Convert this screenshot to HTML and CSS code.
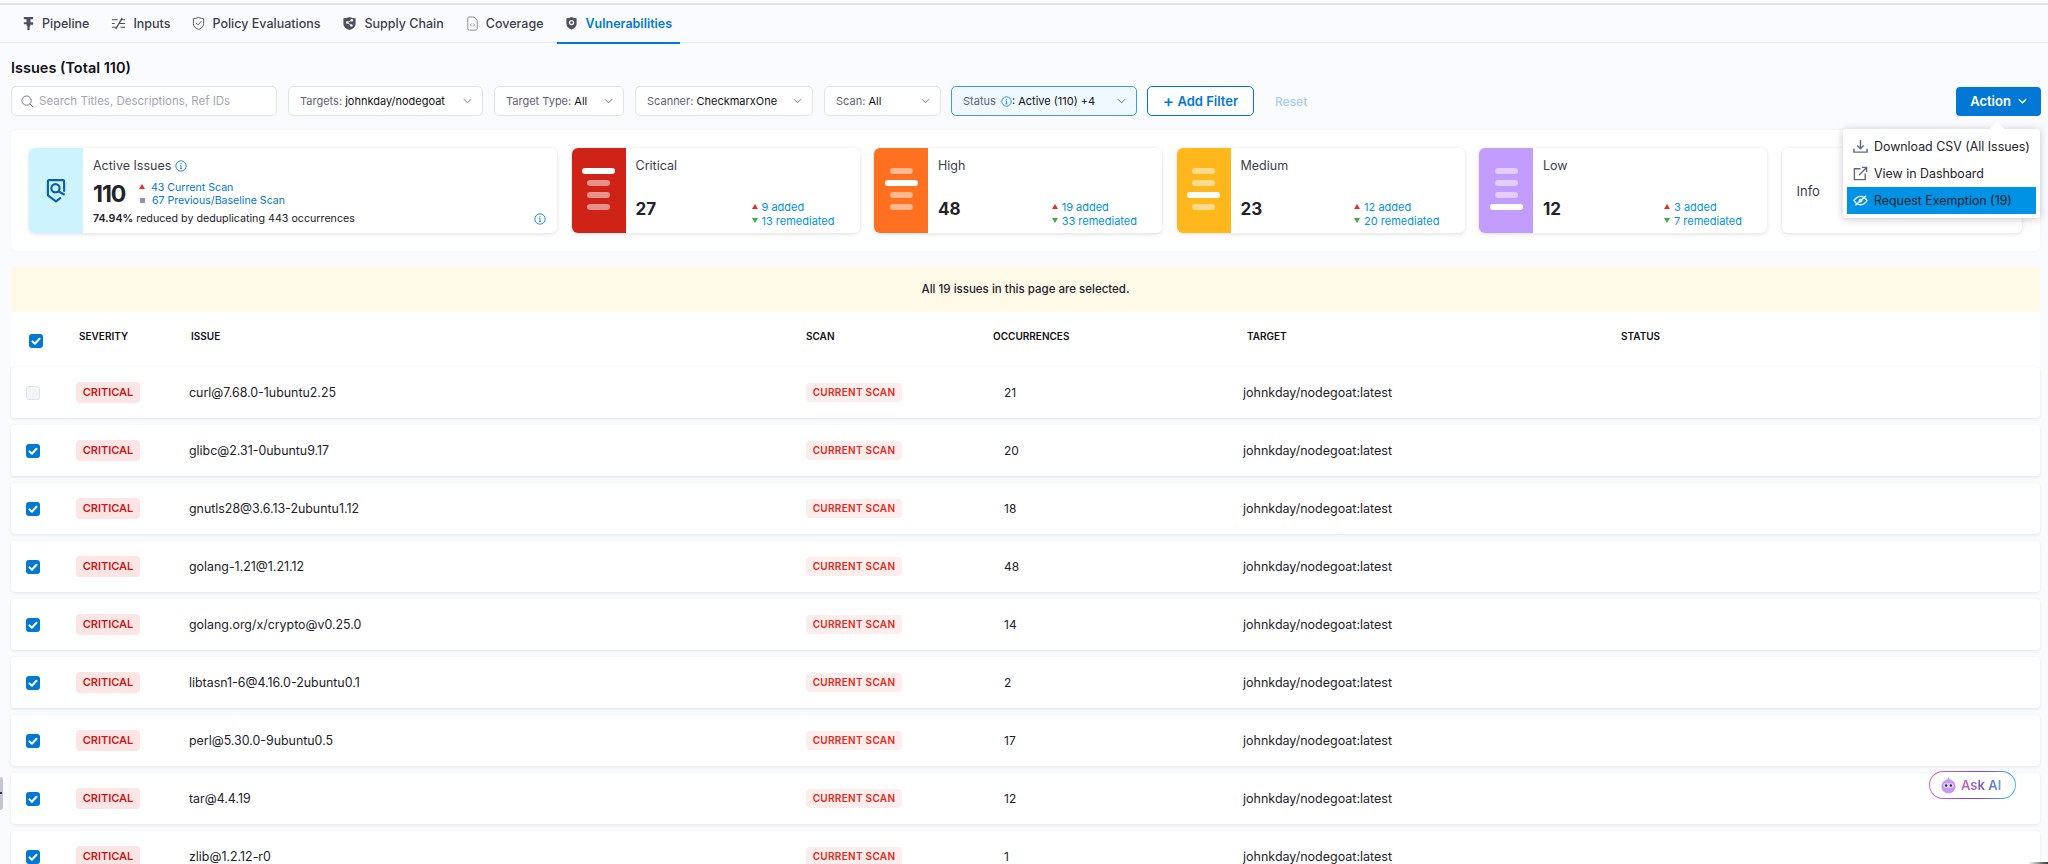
FILE: index.html
```html
<!DOCTYPE html>
<html lang="en">
<head>
    <meta charset="UTF-8">
    <meta name="viewport" content="width=device-width, initial-scale=1.0">
    <title>Vulnerabilities</title>
    <link rel="stylesheet" href="styles.css">
</head>
<body>
    <svg class="sprites" width="0" height="0">
        <symbol id="info" viewBox="0 0 14 14">
            <circle cx="7" cy="7" r="6" fill="none" stroke="currentColor" stroke-width="1"/>
            <path d="M7 6.2v3.6M5.8 10h2.4M6 6.2h1" fill="none" stroke="currentColor" stroke-width="1"/>
            <circle cx="7" cy="4.2" r=".7" fill="currentColor"/>
        </symbol>
        <symbol id="chev" viewBox="0 0 10 6">
            <path d="M1 1l4 4 4-4" fill="none" stroke="currentColor" stroke-width="1"/>
        </symbol>
        <symbol id="tick" viewBox="0 0 14 14">
            <path d="M3.5 7.4l2.4 2.3 4.6-5" fill="none" stroke="#fff" stroke-width="2" stroke-linecap="round" stroke-linejoin="round"/>
        </symbol>
    </svg>

    <nav class="tabs">
        <a class="tab">
            <svg class="tab-icon" viewBox="0 0 14 16"><path d="M2 1h10v2.500H9.200v3.200H12v2.600H9v2H8.200V15H5.800v-4.200H5v-2H2V6.700h2.800V3.500H2z" fill="#4f5162"/></svg>
            Pipeline
        </a>
        <a class="tab">
            <svg class="tab-icon wide" viewBox="0 0 16 14"><path d="M1 3h6M1 7h3M1 11h5M10 3h5M8 7h7M10 11h5M12 1l-7 12" fill="none" stroke="#4f5162" stroke-width="1.300"/></svg>
            Inputs
        </a>
        <a class="tab">
            <svg class="tab-icon" viewBox="0 0 14 16"><path d="M7 1.500c2 .9 3.800 1.300 5.500 1.300v5.400c0 2.900-2.200 4.900-5.500 6.300-3.300-1.400-5.500-3.400-5.500-6.300V2.800C3.200 2.800 5 2.400 7 1.500z" fill="none" stroke="#4f5162" stroke-width="1"/><path d="M4.500 7.500l2 2 3.500-4" fill="none" stroke="#4f5162" stroke-width="1"/></svg>
            Policy Evaluations
        </a>
        <a class="tab">
            <svg class="tab-icon wide" viewBox="0 0 16 16"><path d="M8 1c2.200 1 4.400 1.500 6.500 1.500v6c0 3-2.600 5.200-6.500 6.500-3.900-1.300-6.500-3.500-6.500-6.500v-6C3.600 2.500 5.800 2 8 1z" fill="#4f5162"/><circle cx="5.500" cy="7" r="1.300" fill="#fff"/><circle cx="10.500" cy="4.500" r="1.300" fill="#fff"/><circle cx="10" cy="10" r="1.300" fill="#fff"/><path d="M10.500 4.500l-5 2.500 4.500 3" fill="none" stroke="#fff" stroke-width=".8"/></svg>
            Supply Chain
        </a>
        <a class="tab">
            <svg class="tab-icon" viewBox="0 0 12 16"><path d="M2 1h5.500L11 4.500v9a1.500 1.500 0 0 1-1.500 1.500h-7A1.500 1.500 0 0 1 1 13.500V2A1 1 0 0 1 2 1z" fill="none" stroke="#6b6d85" stroke-width=".8"/><path d="M5 8L3.800 9.500 5 11M7 8l1.200 1.500L7 11" fill="none" stroke="#6b6d85" stroke-width=".8"/></svg>
            Coverage
        </a>
        <a class="tab active">
            <svg class="tab-icon" viewBox="0 0 14 16"><path d="M7 1c2 .9 3.800 1.300 5.500 1.300v5.900c0 2.900-2.200 4.900-5.500 6.300-3.300-1.400-5.500-3.400-5.500-6.300V2.300C3.200 2.300 5 1.900 7 1z" fill="#4f5162"/><circle cx="7" cy="7" r="2.200" fill="none" stroke="#fff" stroke-width="1.300"/></svg>
            Vulnerabilities
        </a>
    </nav>

    <main class="content">
        <h1 class="title">Issues (Total 110)</h1>

        <div class="filters">
            <div class="search">
                <svg class="search-icon" viewBox="0 0 14 14"><circle cx="6" cy="6" r="5" fill="none" stroke="#6b6d85" stroke-width="1"/><path d="M9.700 9.700l3.300 3.300" stroke="#6b6d85" stroke-width="1"/></svg>
                <span>Search Titles, Descriptions, Ref IDs</span>
            </div>
            <div class="filter f-targets"><span><em>Targets:</em> johnkday/nodegoat</span><svg class="chev"><use href="#chev"/></svg></div>
            <div class="filter f-type"><span><em>Target Type:</em> All</span><svg class="chev"><use href="#chev"/></svg></div>
            <div class="filter f-scanner"><span><em>Scanner:</em> CheckmarxOne</span><svg class="chev"><use href="#chev"/></svg></div>
            <div class="filter f-scan"><span><em>Scan:</em> All</span><svg class="chev"><use href="#chev"/></svg></div>
            <div class="filter f-status">
                <span><em>Status</em> <svg class="info-inline status-info"><use href="#info"/></svg>: Active (110) +4</span>
                <svg class="chev"><use href="#chev"/></svg>
            </div>
            <button class="add-filter"><span class="plus">+</span> Add Filter</button>
            <span class="reset">Reset</span>
            <div class="action-wrap">
                <button class="action">Action <svg class="action-chev" viewBox="0 0 10 6"><path d="M1 1l4 4 4-4" fill="none" stroke="#fff" stroke-width="1.500"/></svg></button>
                <div class="menu">
                    <div class="menu-item">
                        <svg class="menu-icon" viewBox="0 0 16 16"><path d="M8 1v9M4.500 6.800L8 10.300l3.500-3.500M1 10.500v3.500h14v-3.500" fill="none" stroke="#5b6b7f" stroke-width="1.500"/></svg>
                        Download CSV (All Issues)
                    </div>
                    <div class="menu-item">
                        <svg class="menu-icon" viewBox="0 0 16 16"><path d="M8 3H1.500v11.500H13V8M6.500 9.500L14.500 1.500M9.500 1.500h5v5" fill="none" stroke="#5b6b7f" stroke-width="1.500"/></svg>
                        View in Dashboard
                    </div>
                    <div class="menu-item selected">
                        <svg class="menu-icon" viewBox="0 0 16 16"><path d="M1 8c2-3 4.400-4.500 7-4.500S13 5 15 8c-2 3-4.400 4.500-7 4.500S3 11 1 8z" fill="none" stroke="#fff" stroke-width="1.400"/><circle cx="8" cy="8" r="2" fill="#fff"/><path d="M2.500 13L14 3" stroke="#fff" stroke-width="1.500"/></svg>
                        Request Exemption (19)
                    </div>
                </div>
            </div>
        </div>

        <section class="summary">
            <div class="card">
                <div class="card-side side-active">
                    <svg class="active-icon" viewBox="0 0 20 24"><path d="M17.500 12V3a1 1 0 0 0-1-1h-13a1 1 0 0 0-1 1v13l7.500 5.500 4-3" fill="none" stroke="#0a5fb0" stroke-width="2" stroke-linejoin="round" stroke-linecap="round"/><circle cx="9.500" cy="9.500" r="3.800" fill="none" stroke="#0a5fb0" stroke-width="2"/><path d="M12.500 12.500l5.500 3" stroke="#0a5fb0" stroke-width="2"/></svg>
                </div>
                <div class="active-body">
                    <div class="card-title">Active Issues <svg class="info-inline big"><use href="#info"/></svg></div>
                    <div class="active-mid">
                        <b class="active-count">110</b>
                        <div class="active-links">
                            <div><i class="tri up"></i>43 Current Scan</div>
                            <div><i class="square"></i>67 Previous/Baseline Scan</div>
                        </div>
                    </div>
                    <div class="active-foot">
                        <span><b>74.94%</b> reduced by deduplicating 443 occurrences</span>
                        <svg class="info-inline big"><use href="#info"/></svg>
                    </div>
                </div>
            </div>

            <div class="card">
                <div class="card-side side-critical">
                    <i class="bar on"></i><i class="bar"></i><i class="bar"></i><i class="bar"></i>
                </div>
                <div class="sev-body">
                    <div class="card-title">Critical</div>
                    <div class="sev-foot">
                        <b class="sev-count">27</b>
                        <div class="sev-delta">
                            <div><i class="tri up"></i>9 added</div>
                            <div><i class="tri down"></i>13 remediated</div>
                        </div>
                    </div>
                </div>
            </div>

            <div class="card">
                <div class="card-side side-high">
                    <i class="bar"></i><i class="bar on"></i><i class="bar"></i><i class="bar"></i>
                </div>
                <div class="sev-body">
                    <div class="card-title">High</div>
                    <div class="sev-foot">
                        <b class="sev-count">48</b>
                        <div class="sev-delta">
                            <div><i class="tri up"></i>19 added</div>
                            <div><i class="tri down"></i>33 remediated</div>
                        </div>
                    </div>
                </div>
            </div>

            <div class="card">
                <div class="card-side side-medium">
                    <i class="bar"></i><i class="bar"></i><i class="bar on"></i><i class="bar"></i>
                </div>
                <div class="sev-body">
                    <div class="card-title">Medium</div>
                    <div class="sev-foot">
                        <b class="sev-count">23</b>
                        <div class="sev-delta">
                            <div><i class="tri up"></i>12 added</div>
                            <div><i class="tri down"></i>20 remediated</div>
                        </div>
                    </div>
                </div>
            </div>

            <div class="card">
                <div class="card-side side-low">
                    <i class="bar"></i><i class="bar"></i><i class="bar"></i><i class="bar on"></i>
                </div>
                <div class="sev-body">
                    <div class="card-title">Low</div>
                    <div class="sev-foot">
                        <b class="sev-count">12</b>
                        <div class="sev-delta">
                            <div><i class="tri up"></i>3 added</div>
                            <div><i class="tri down"></i>7 remediated</div>
                        </div>
                    </div>
                </div>
            </div>

            <div class="card card-info">Info</div>
        </section>

        <div class="banner">All 19 issues in this page are selected.</div>

        <div class="table-head grid">
            <span class="head-check"><span class="check on"><svg><use href="#tick"/></svg></span></span>
            <span class="head-sev">SEVERITY</span>
            <span class="head-issue">ISSUE</span>
            <span>SCAN</span>
            <span>OCCURRENCES</span>
            <span class="head-target">TARGET</span>
            <span>STATUS</span>
        </div>

        <div class="row grid">
            <span class="check off"></span>
            <span class="sev-badge">CRITICAL</span>
            <span>curl@7.68.0-1ubuntu2.25</span>
            <span class="scan-badge">CURRENT SCAN</span>
            <span class="occ">21</span>
            <span class="target">johnkday/nodegoat:latest</span>
        </div>
        <div class="row grid">
            <span class="check on"><svg><use href="#tick"/></svg></span>
            <span class="sev-badge">CRITICAL</span>
            <span>glibc@2.31-0ubuntu9.17</span>
            <span class="scan-badge">CURRENT SCAN</span>
            <span class="occ">20</span>
            <span class="target">johnkday/nodegoat:latest</span>
        </div>
        <div class="row grid">
            <span class="check on"><svg><use href="#tick"/></svg></span>
            <span class="sev-badge">CRITICAL</span>
            <span>gnutls28@3.6.13-2ubuntu1.12</span>
            <span class="scan-badge">CURRENT SCAN</span>
            <span class="occ">18</span>
            <span class="target">johnkday/nodegoat:latest</span>
        </div>
        <div class="row grid">
            <span class="check on"><svg><use href="#tick"/></svg></span>
            <span class="sev-badge">CRITICAL</span>
            <span>golang-1.21@1.21.12</span>
            <span class="scan-badge">CURRENT SCAN</span>
            <span class="occ">48</span>
            <span class="target">johnkday/nodegoat:latest</span>
        </div>
        <div class="row grid">
            <span class="check on"><svg><use href="#tick"/></svg></span>
            <span class="sev-badge">CRITICAL</span>
            <span>golang.org/x/crypto@v0.25.0</span>
            <span class="scan-badge">CURRENT SCAN</span>
            <span class="occ">14</span>
            <span class="target">johnkday/nodegoat:latest</span>
        </div>
        <div class="row grid">
            <span class="check on"><svg><use href="#tick"/></svg></span>
            <span class="sev-badge">CRITICAL</span>
            <span>libtasn1-6@4.16.0-2ubuntu0.1</span>
            <span class="scan-badge">CURRENT SCAN</span>
            <span class="occ">2</span>
            <span class="target">johnkday/nodegoat:latest</span>
        </div>
        <div class="row grid">
            <span class="check on"><svg><use href="#tick"/></svg></span>
            <span class="sev-badge">CRITICAL</span>
            <span>perl@5.30.0-9ubuntu0.5</span>
            <span class="scan-badge">CURRENT SCAN</span>
            <span class="occ">17</span>
            <span class="target">johnkday/nodegoat:latest</span>
        </div>
        <div class="row grid">
            <span class="check on"><svg><use href="#tick"/></svg></span>
            <span class="sev-badge">CRITICAL</span>
            <span>tar@4.4.19</span>
            <span class="scan-badge">CURRENT SCAN</span>
            <span class="occ">12</span>
            <span class="target">johnkday/nodegoat:latest</span>
        </div>
        <div class="row grid">
            <span class="check on"><svg><use href="#tick"/></svg></span>
            <span class="sev-badge">CRITICAL</span>
            <span>zlib@1.2.12-r0</span>
            <span class="scan-badge">CURRENT SCAN</span>
            <span class="occ">1</span>
            <span class="target">johnkday/nodegoat:latest</span>
        </div>
    </main>

    <div class="side-handle"></div>
    <div class="corner-mark"></div>

    <button class="ask-ai">
        <svg class="ask-icon" viewBox="0 0 18 18"><circle cx="9" cy="10" r="7.500" fill="#c39bf5"/><path d="M9 0l1.500 3h-3z" fill="#c39bf5"/><rect x="3.500" y="6.500" width="11" height="5" rx="2.500" fill="#e6d5fb"/><circle cx="6.500" cy="9" r="1.300" fill="#3b2a6b"/><circle cx="11.500" cy="9" r="1.300" fill="#3b2a6b"/></svg>
        <span class="ask-text">Ask AI</span>
    </button>
</body>
</html>
```

FILE: styles.css
```css
* {
    margin: 0;
    padding: 0;
    box-sizing: border-box;
}

html, body {
    height: 864px;
    overflow: hidden;
}

body {
    font-family: 'Inter', 'Liberation Sans', sans-serif;
    background: #fafbff;
    color: #22222a;
    border-top: 1px solid #fff;
}

.sprites {
    position: absolute;
}

em {
    font-style: normal;
    color: #5f6178;
}

/* Tabs */
.tabs {
    display: flex;
    gap: 6px;
    height: 40px;
    padding-left: 14px;
    border-top: 2px solid #e3e5ec;
    border-bottom: 1px solid #e8eaf2;
    margin-top: 2px;
}

.tab {
    display: flex;
    align-items: center;
    gap: 7px;
    padding: 0 8px;
    font-size: 12.500px;
    font-weight: 500;
    color: #3c3e4e;
    border-bottom: 2px solid transparent;
    height: 39px;
}

.tab.active {
    color: #0278d5;
    font-weight: 600;
    border-bottom-color: #0278d5;
}

.tab-icon {
    width: 13px;
    height: 15px;
}

.tab-icon.wide {
    width: 15px;
}

/* Main */
.content {
    padding: 0 8px 0 11px;
}

.title {
    font-size: 14.500px;
    font-weight: 600;
    color: #111116;
    line-height: 18px;
    margin-top: 16px;
}

.filters {
    display: flex;
    align-items: center;
    gap: 11px;
    height: 30px;
    margin-top: 9px;
}

.search, .filter {
    display: flex;
    align-items: center;
    height: 30px;
    background: #fff;
    border: 1px solid #e3e5ec;
    border-radius: 5px;
    font-size: 11px;
}

.search {
    width: 266px;
    padding-left: 9px;
    gap: 5px;
    font-size: 11.500px;
    color: #a2a6b8;
}

.search-icon {
    width: 13px;
    height: 13px;
}

.filter {
    justify-content: space-between;
    padding: 0 10px 0 11px;
    color: #111116;
}

.f-targets { width: 195px; }
.f-type { width: 130px; }
.f-scanner { width: 178px; }
.f-scan { width: 117px; }

.f-status {
    width: 186px;
    margin-left: -1px;
    background: #eff9ff;
    border-color: #3e9be3;
}

.chev {
    width: 9px;
    height: 6px;
    color: #6b6d85;
}

.info-inline {
    width: 11px;
    height: 11px;
    color: #0278d5;
    vertical-align: -2px;
}

.status-info {
    margin: 0 0 0 2px;
}

.info-inline.big {
    width: 12px;
    height: 12px;
}

.add-filter {
    width: 107px;
    height: 30px;
    margin-left: -1px;
    background: #fff;
    border: 1px solid #0278d5;
    border-radius: 5px;
    color: #0278d5;
    font-family: inherit;
    font-size: 13px;
    font-weight: 600;
}

.plus {
    font-size: 17px;
    font-weight: 500;
    line-height: 1;
    vertical-align: -1px;
}

.reset {
    margin-left: 10px;
    font-size: 12px;
    font-weight: 500;
    color: #a6cdf0;
}

.action-wrap {
    position: relative;
    margin-left: auto;
    margin-right: -1px;
}

.action {
    display: flex;
    align-items: center;
    justify-content: center;
    gap: 7px;
    width: 85px;
    height: 29px;
    background: #0278d5;
    border: none;
    border-radius: 4px;
    color: #fff;
    font-family: inherit;
    font-size: 13px;
    font-weight: 600;
}

.action-chev {
    width: 9px;
    height: 6px;
}

.menu {
    position: absolute;
    z-index: 5;
    top: 42px;
    right: 1px;
    width: 197px;
    height: 89px;
    padding: 4px;
    background: #fff;
    border-radius: 3px;
    box-shadow: 0 1px 8px rgba(40, 41, 61, 0.25);
}

.menu::before {
    content: "";
    position: absolute;
    top: -5px;
    right: 37px;
    width: 12px;
    height: 12px;
    background: #fff;
    transform: rotate(45deg);
}

.menu-item {
    position: relative;
    display: flex;
    align-items: center;
    gap: 6px;
    height: 27px;
    padding-left: 6px;
    font-size: 12.400px;
    white-space: nowrap;
    color: #22222a;
}

.menu-item.selected {
    background: #0092e4;
}

.menu-icon {
    width: 15px;
    height: 15px;
    flex: none;
}

/* Summary */
.summary {
    display: grid;
    grid-template-columns: 528px repeat(4, 288px) 240px;
    column-gap: 14.500px;
    height: 121px;
    margin-top: 14px;
    padding: 18px 18px;
    background: #fff;
    border-radius: 6px;
    box-shadow: 0 0 2px rgba(96, 97, 112, 0.08);
}

.card {
    display: flex;
    height: 85px;
    background: #fff;
    border-radius: 6px;
    overflow: hidden;
    box-shadow: 0 1px 4px rgba(96, 97, 112, 0.2);
}

.card-info {
    align-items: center;
    padding-left: 15px;
    font-size: 13px;
    color: #3c3e4e;
}

.card-side {
    display: flex;
    flex-direction: column;
    align-items: center;
    gap: 6px;
    width: 54px;
    flex: none;
    padding-top: 20px;
}

.side-active {
    background: #cdf4fe;
    justify-content: center;
    padding-top: 0;
}

.side-critical { background: #cf2318; }
.side-high { background: #ff7020; }
.side-medium { background: #ffb71b; }
.side-low { background: #c29cff; }

.bar {
    width: 23px;
    height: 6px;
    border-radius: 3px;
    background: rgba(255, 255, 255, 0.5);
}

.bar.on {
    width: 33px;
    background: #fff;
}

.active-icon {
    width: 22px;
    height: 26px;
}

.card-title {
    font-size: 12.500px;
    line-height: 16px;
    color: #3c3e4e;
}

.active-body {
    flex: 1;
    padding: 10px 11px 0 10px;
}

.active-mid {
    display: flex;
    align-items: center;
    gap: 15px;
    margin-top: 6px;
}

.active-count {
    font-size: 23px;
    font-weight: 700;
    letter-spacing: -1px;
    width: 31px;
    color: #22222a;
}

.active-links {
    font-size: 10.600px;
    line-height: 13px;
    color: #0278d5;
}

.active-foot {
    display: flex;
    align-items: center;
    justify-content: space-between;
    margin-top: 4px;
    font-size: 10.700px;
    line-height: 14px;
}

.active-foot b {
    font-weight: 600;
}

.tri {
    display: inline-block;
    width: 0;
    height: 0;
    margin-right: 4px;
    border-left: 3.500px solid transparent;
    border-right: 3.500px solid transparent;
    vertical-align: 2px;
}

.tri.up {
    border-bottom: 5px solid #e43326;
}

.tri.down {
    border-top: 5px solid #42ab45;
}

.square {
    display: inline-block;
    width: 5px;
    height: 5px;
    margin: 0 7px 1px 1px;
    background: #9293ab;
}

.active-links .tri {
    margin-right: 6px;
}

.sev-body {
    flex: 1;
    display: flex;
    flex-direction: column;
    padding: 10px 25px 0 10px;
}

.sev-foot {
    display: flex;
    justify-content: space-between;
    margin-top: 22px;
}

.sev-count {
    font-size: 17px;
    font-weight: 700;
    line-height: 26px;
    color: #22222a;
}

.sev-delta {
    margin-top: 4px;
    font-size: 11px;
    line-height: 14px;
    color: #0092e4;
}

/* Table */
.banner {
    display: flex;
    align-items: center;
    justify-content: center;
    height: 46px;
    margin-top: 15px;
    background: #fff9e7;
    border-radius: 4px 4px 0 0;
    font-size: 11.500px;
    font-weight: 500;
    color: #22222a;
}

.grid {
    display: grid;
    grid-template-columns: 50px 113px 617px 187px 250px 378px 1fr;
    align-items: center;
    padding-left: 15px;
}

.table-head {
    height: 55px;
    background: #fff;
    font-size: 10px;
    font-weight: 600;
    color: #111116;
    padding-bottom: 7px;
}

.head-check { padding-left: 3px; padding-top: 9px; }
.head-sev { padding-left: 3px; }
.head-issue { padding-left: 2px; }
.head-target { padding-left: 4px; }

.row {
    height: 51px;
    margin-bottom: 7px;
    background: #fff;
    border-radius: 4px;
    font-size: 12.400px;
    color: #22222a;
    box-shadow: 0 1px 3px rgba(96, 97, 112, 0.14);
}

.check {
    display: block;
    width: 14px;
    height: 14px;
    border-radius: 3px;
}

.check svg {
    display: block;
    width: 14px;
    height: 14px;
}

.check.on {
    background: #0278d5;
}

.check.off {
    background: #f3f4f9;
    border: 1px solid #e3e5ec;
}

.sev-badge {
    justify-self: start;
    width: 64px;
    height: 21px;
    line-height: 21px;
    text-align: center;
    background: #fce5e4;
    border-radius: 4px;
    font-size: 11px;
    font-weight: 600;
    color: #c41c1c;
}

.scan-badge {
    justify-self: start;
    width: 96px;
    height: 19px;
    line-height: 19px;
    text-align: center;
    background: #fdeeed;
    border-radius: 4px;
    font-size: 10px;
    font-weight: 600;
    letter-spacing: 0.300px;
    color: #e02a20;
}

.occ {
    padding-left: 11px;
    font-size: 12px;
}

.target {
    font-size: 12.500px;
}

/* Floating bits */
.side-handle {
    position: absolute;
    left: 0;
    top: 777px;
    width: 3px;
    height: 33px;
    background: #c5c6d3;
    border-radius: 0 3px 3px 0;
}

.side-handle::after {
    content: "";
    position: absolute;
    left: 0;
    top: 15px;
    width: 2px;
    height: 2px;
    background: #33343f;
}

.corner-mark {
    position: absolute;
    right: 0;
    bottom: 0;
    width: 20px;
    height: 2px;
    background: linear-gradient(90deg, rgba(40, 40, 50, 0), #33343f);
}

.ask-ai {
    position: absolute;
    left: 1929px;
    top: 771px;
    display: flex;
    align-items: center;
    gap: 4px;
    width: 87px;
    height: 28px;
    padding-left: 10px;
    border: 1px solid transparent;
    border-radius: 14px;
    background: linear-gradient(#fff, #fff) padding-box,
        linear-gradient(100deg, #e56bb5, #7a3fe0 55%, #43c6ee) border-box;
    font-family: inherit;
}

.ask-icon {
    width: 17px;
    height: 17px;
    flex: none;
}

.ask-text {
    font-size: 13px;
    font-weight: 600;
    background: linear-gradient(90deg, #d565b0, #6f56d8 60%, #5aa5e8);
    -webkit-background-clip: text;
    background-clip: text;
    color: transparent;
}
```
